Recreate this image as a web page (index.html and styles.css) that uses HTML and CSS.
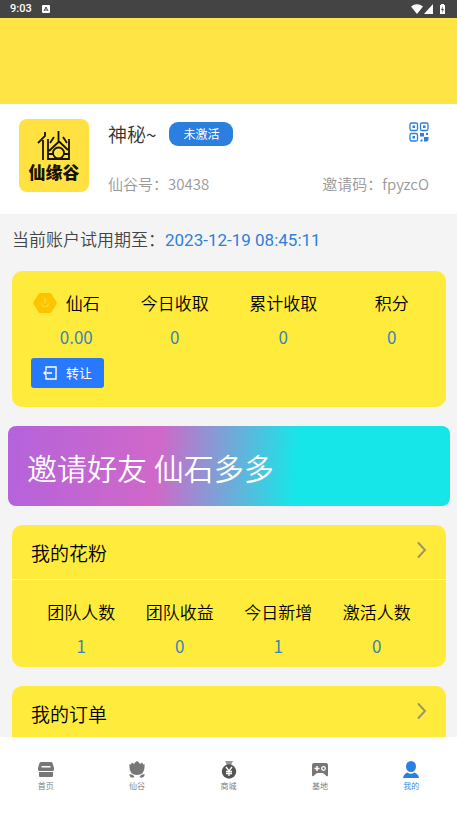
FILE: index.html
```html
<!DOCTYPE html>
<html lang="zh-CN">
<head>
<meta charset="utf-8">
<meta name="viewport" content="width=device-width, initial-scale=1">
<title>我的</title>
<link rel="stylesheet" href="styles.css">
</head>
<body>
<div class="status">
  <span>9:03</span>
  <svg class="status-app" width="8" height="8" viewBox="0 0 8 8"><rect width="8" height="8" rx="1" fill="#fff"/><path d="M2 6L4 2l2 4M3 5h2" fill="none" stroke="#444"/></svg>
  <svg class="status-icons" width="36" height="12" viewBox="0 0 36 12" fill="#fff"><path d="M0 3.500Q6-1 12 3.500L6 11zM13 11L22 1v10zM29 2h1V1h3v1h1v9h-5z"/><path d="M32 3l-2 4h1.500L31 10l2-4h-1.500z" fill="#444"/></svg>
</div>
<main class="content">
  <div class="cover"></div>
  <section class="profile">
    <div class="logo">
      <svg width="36" height="32" viewBox="0 0 36 32" fill="none" stroke="#181200" stroke-width="1.800"><path d="M9 1v4L2 12M7 9v20M12 8v20h21V8M22.500 0v11L13 20M22.500 10L32 19M18 6l-4 6M27 6l4 6M12 23h5M28 23h5"/><circle cx="22.500" cy="22" r="5.500"/></svg>
      <span>仙缘谷</span>
    </div>
    <div class="info">
      <div class="row">
        <div class="name"><h1>神秘~</h1><span class="badge">未激活</span></div>
        <button class="qr" aria-label="二维码">
          <svg width="20" height="20" viewBox="0 0 20 20" fill="none" stroke="#2b7fe0" stroke-width="1.300"><rect x="1" y="1" width="7.500" height="7.500" rx="1.500"/><rect x="11.500" y="1" width="7.500" height="7.500" rx="1.500"/><rect x="1" y="11.500" width="7.500" height="7.500" rx="1.500"/><path stroke="none" fill="#2b7fe0" d="M3.500 3.500H6V6H3.500zM14 3.500h2.500V6H14zM3.500 14H6v2.500H3.500zM11 11h4v3.500h-4zM17 11h2v2h-2zM15 15h4.500v3l-1.500 1.500h-3zM11.500 17.500h2v2h-2z"/></svg>
        </button>
      </div>
      <div class="row codes"><span>仙谷号：30438</span><span>邀请码：fpyzcO</span></div>
    </div>
  </section>
  <p class="trial">当前账户试用期至：<time>2023-12-19 08:45:11</time></p>

  <section class="card wallet">
    <dl class="stats">
      <div class="stone"><dt><svg width="24" height="22" viewBox="0 0 24 22"><path d="M7 1h10q1 0 1.500 1l5 8q.5 1 0 2l-5 8q-.5 1-1.500 1H7q-1 0-1.500-1l-5-8q-.5-1 0-2l5-8Q6 1 7 1z" fill="#ffc400"/><path d="M12 5q3 4 0 7-3-3 0-7zM7 10l4 4h2l4-4-2 5H9z" fill="#ffd62e"/></svg>仙石</dt><dd>0.00</dd></div>
      <div><dt>今日收取</dt><dd>0</dd></div>
      <div><dt>累计收取</dt><dd>0</dd></div>
      <div><dt>积分</dt><dd>0</dd></div>
    </dl>
    <button class="transfer"><svg width="14" height="14" viewBox="0 0 14 14" fill="none" stroke="#fff" stroke-width="1.400"><path d="M3 4V1h10v12H3v-3M9 7H1M3.500 4.500L1 7l2.500 2.500"/></svg>转让</button>
  </section>

  <a class="banner" href="#invite">邀请好友 仙石多多</a>

  <section class="card team">
    <a class="head" href="#team">我的花粉<svg width="10" height="18" viewBox="0 0 10 18"><path d="M1.500 2L8 9l-6.500 7"/></svg></a>
    <dl class="stats">
      <div><dt>团队人数</dt><dd>1</dd></div>
      <div><dt>团队收益</dt><dd>0</dd></div>
      <div><dt>今日新增</dt><dd>1</dd></div>
      <div><dt>激活人数</dt><dd>0</dd></div>
    </dl>
  </section>

  <section class="card orders">
    <a class="head" href="#orders">我的订单<svg width="10" height="18" viewBox="0 0 10 18"><path d="M1.500 2L8 9l-6.500 7"/></svg></a>
  </section>
</main>
<nav class="tabs">
  <a href="#home"><svg width="18" height="18" viewBox="0 0 18 18" fill="currentColor"><path fill-rule="evenodd" d="M4 1h10q1 0 1.500 1L17 7v2q-.5 1-1.500 1h-13Q1.500 10 1 9V7l1.500-5Q3 1 4 1zM4.500 5v1.500h9V5z"/><path d="M2 11h14v4q0 1-1 1H3q-1 0-1-1z"/></svg>首页</a>
  <a href="#valley"><svg width="18" height="18" viewBox="0 0 18 18" fill="currentColor"><path d="M9 0q2 1 3 3l2-1.500q1 1 1 2L16.500 3q1 11-7.500 11Q.5 14 1.500 3L3 3.500q0-1 1-2L6 3q1-2 3-3zM1 13.500q4-1 5.500 2.500Q3 18.500 1 13.500zM17 13.500q-4-1-5.500 2.500 3.500 2.500 5.500-2.500z"/></svg>仙谷</a>
  <a href="#mall"><svg width="18" height="18" viewBox="0 0 18 18"><path d="M5 0h8l-2 4H7z" fill="#999"/><circle cx="9" cy="10.500" r="7.200" fill="#555"/><path d="M6 6l3 4 3-4M9 10v5M6 10.500h6M6 12.500h6" fill="none" stroke="#fff" stroke-width="1.300"/></svg>商城</a>
  <a href="#base"><svg width="18" height="18" viewBox="0 0 18 18"><path d="M3 2h12q2 0 2 2v10q0 2-1.500 1L12 12H6l-3.500 3Q1 16 1 14V4q0-2 2-2z" fill="currentColor"/><path d="M6 5v5M3.500 7.500h5" stroke="#fff" stroke-width="1.500"/><circle cx="12.500" cy="7.500" r="1.800" fill="none" stroke="#fff" stroke-width="1.300"/></svg>基地</a>
  <a class="active" href="#me"><svg width="18" height="18" viewBox="0 0 18 18" fill="currentColor"><ellipse cx="9" cy="5.500" rx="5" ry="5.500"/><path d="M1 17q.5-4 4.500-5.500Q9 14 12.500 11.500 16.500 13 17 17z"/></svg>我的</a>
</nav>
</body>
</html>
```
FILE: styles.css
```css
* { box-sizing: border-box; }
body {
  margin: 0;
  height: 100vh;
  display: flex;
  flex-direction: column;
  overflow: hidden;
  background: #f4f4f4;
  color: #000;
  font-family: "Noto Sans CJK SC", sans-serif;
  font-size: 17px;
  font-weight: 350;
  line-height: 24px;
}
a { color: inherit; text-decoration: none; }
svg { display: block; flex: none; }
button { border: 0; padding: 0; background: none; font: inherit; }
h1, p, dl, dd { margin: 0; }

.status {
  flex: none;
  display: flex;
  align-items: center;
  height: 18px;
  padding: 0 10px;
  background: #444;
  color: #fff;
  font: 500 11px/18px Roboto, sans-serif;
}
.status-app { margin-left: 10px; }
.status-icons { margin-left: auto; }

.content { flex: 1; min-height: 0; overflow: hidden; }
.cover { height: 86px; background: #ffe445; }
.profile {
  display: flex;
  gap: 19px;
  padding: 15px 28px 18px 19px;
  background: #fff;
}
.logo {
  flex: none;
  display: flex;
  flex-direction: column;
  align-items: center;
  width: 70px;
  height: 73px;
  padding-top: 12px;
  border-radius: 8px;
  background: #ffe142;
  color: #181200;
  font-size: 17px;
  font-weight: 900;
  line-height: 17px;
}
.info { flex: 1; }
.row { display: flex; justify-content: space-between; align-items: center; }
.name { display: flex; align-items: center; gap: 13px; height: 30px; }
h1 { font-size: 19px; font-weight: inherit; color: #333; }
.badge {
  padding: 0 14px;
  border-radius: 9px;
  background: #2b7fe0;
  color: #fff;
  font-size: 12px;
  font-weight: 400;
  line-height: 24px;
}
.qr { align-self: flex-start; padding-top: 3px; }
.codes { margin-top: 23px; color: #999; font-size: 15px; }
.trial { padding: 12px 12px 18px; color: #444; font-size: 17px; line-height: 25px; }
.trial time { font-family: Roboto, sans-serif; font-weight: 400; color: #2f7fdb; }

.card { margin: 0 11px 19px 12px; border-radius: 10px; background: #ffeb3b; }
.stats { display: flex; text-align: center; }
.stats > div { flex: 1; }
.stats dt { white-space: nowrap; }
.stats dd { margin-top: 10px; color: #3a84b8; font-weight: 400; }
.wallet { padding: 20px 0 19px; }
.stone dt { display: flex; align-items: center; justify-content: center; gap: 9px; }
.stone dd { padding-left: 20px; }
.transfer {
  display: flex;
  align-items: center;
  gap: 9px;
  height: 30px;
  margin: 9px 0 0 19px;
  padding: 0 12px;
  border-radius: 3px;
  background: #2979ff;
  color: #fff;
  font-size: 13px;
  font-weight: 400;
}
.banner {
  display: block;
  margin: 0 7px 19px 8px;
  padding: 20px 19px 18px;
  border-radius: 8px;
  background: linear-gradient(95deg, #b463dc, #d068c8 34%, #17e6e8 65%);
  color: #fff;
  font-size: 30px;
  line-height: 42px;
}
.head {
  display: flex;
  justify-content: space-between;
  padding: 16px 19px 14px;
  font-size: 19px;
}
.head path { fill: none; stroke: #9d9568; stroke-width: 2; stroke-linecap: round; }
.team .head { border-bottom: 1px solid #fff6b0; }
.team .stats { padding: 20px 20px 9px; }
.orders { padding-bottom: 20px; }

.tabs {
  flex: none;
  display: flex;
  height: 77px;
  padding-top: 24px;
  background: #fff;
  color: #777;
  font-size: 8px;
  line-height: 14px;
}
.tabs a { flex: 1; display: flex; flex-direction: column; align-items: center; }
.tabs .active { color: #2b7fe0; }
```
